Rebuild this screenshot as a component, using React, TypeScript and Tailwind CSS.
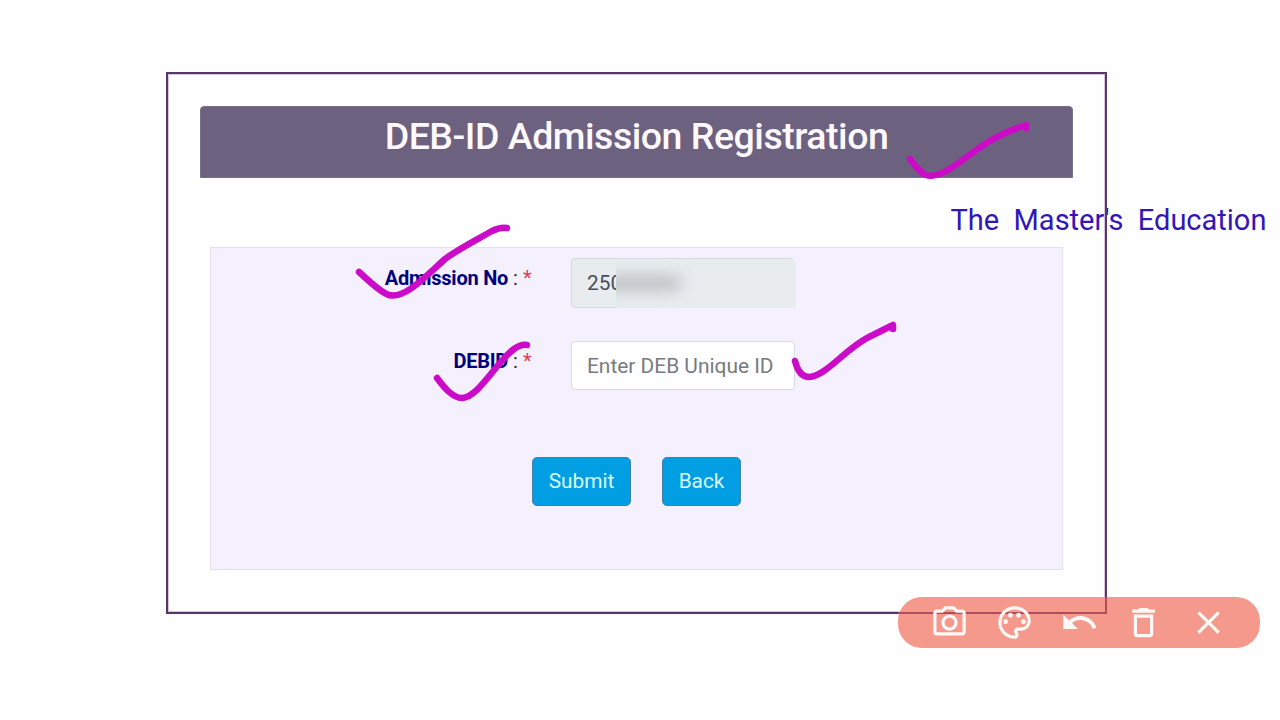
import { MdClose, MdDeleteOutline, MdOutlinePalette, MdOutlinePhotoCamera, MdUndo } from "react-icons/md";

const strokes = [
    "M910 159 C915 166 921 173 926 175 C938 179 955 166 968 156 C984 144 1000 133 1026 125 L1026 128",
    "M359 272 C368 280 381 293 389 295 C405 299 425 277 445 259 C460 248 480 238 492 231 Q500 227 507 228",
    "M437 378 C443 386 452 398 462 398 C479 397 497 361 514 349 Q521 344 527 345",
    "M795 361 C797 369 801 377 809 377 C827 376 847 346 873 335 L893 325 L893 329",
];

const Label = ({ text }: { text: string }) => (
    <label className="block w-[320.5px] pt-[5px] text-right text-[20px] leading-[30px] text-[#333]">
        <span className="font-bold tracking-[-0.23px] text-[#00007c]">{text}</span> : <span className="text-[#d9434e]">*</span>
    </label>
);

const Toolbar = () => (
    <div className="absolute left-[898px] top-[597px] h-[51px] w-[362px]">
        <div className="flex h-full items-center justify-between rounded-[24px] bg-[#f4998c] px-[32px] text-[39px] text-[#fff8f4]">
            <MdOutlinePhotoCamera className="z-10" />
            <MdOutlinePalette className="z-10" />
            <MdUndo className="z-10" />
            <MdDeleteOutline className="z-10" />
            <MdClose className="z-10" />
        </div>
        <div className="absolute left-0 top-0 h-[17px] w-[209px] border-b-2 border-r-2 border-[#b04c5c]"></div>
    </div>
);

export default function App() {
    return (
        <div className="relative h-[720px] w-[1280px] overflow-hidden bg-[#fefefe] pl-[166px] pt-[72px] font-['Roboto',sans-serif]">
            <main className="h-[542px] w-[941px] border-2 border-[#563867] px-[32px] pt-[32px] shadow-[inset_0_0_0_1px_#d9c4df]">
                <header className="h-[72px] w-[873px] rounded-t-[4px] border border-[#77708a] bg-[#6c617f] pt-[6px]">
                    <h1 className="text-center text-[37.5px] font-medium leading-[46px] tracking-[-0.48px] text-[#fef8ff]">DEB-ID Admission Registration</h1>
                </header>

                <form className="ml-[10px] mt-[69px] h-[323px] w-[853px] border border-[#e4e1ec] bg-[#f4f0fe]">
                    <div className="flex pt-[10px]">
                        <Label text="Admission No" />
                        <div className="relative ml-[39.5px] h-[50px] w-[224px] rounded-[4px] border border-[#d5d9e3] bg-[#e8ecef] pl-[15px] text-[20.8px] leading-[49px] text-[#495057]">
                            250
                            <div className="absolute left-[44px] top-0 h-[49px] w-[180px] overflow-hidden rounded-r-[4px] bg-[#e8ecef]">
                                <div className="-ml-[12px] mt-[18px] h-[12px] w-[76px] bg-[#b0b4b7] blur-[8px]"></div>
                            </div>
                        </div>
                    </div>

                    <div className="mt-[33px] flex">
                        <Label text="DEBID" />
                        <input
                            className="ml-[39.5px] h-[49px] w-[224px] rounded-[4px] border border-[#dcdbe4] bg-white pl-[15px] pt-px text-[20.9px] placeholder:text-[#777b80]"
                            placeholder="Enter DEB Unique ID"
                        />
                    </div>

                    <div className="ml-[321px] mt-[67px] flex gap-[31px] text-[20.8px] text-[#d9fbff]">
                        <button type="button" className="h-[49px] w-[99px] rounded-[5px] border border-[#427fa9] bg-[#029ee3]">Submit</button>
                        <button type="button" className="h-[49px] w-[79px] rounded-[5px] border border-[#427fa9] bg-[#029ee3]">Back</button>
                    </div>
                </form>
            </main>

            <p className="absolute left-[950.5px] top-[202px] whitespace-pre text-[29px] leading-[36px] text-[#3216b8]">The  Master's  Education</p>
            <div className="absolute left-[1105px] top-[200px] h-[40px] w-[2px] bg-[#563867]"></div>

            <svg className="absolute left-0 top-0" width="1280" height="720" fill="none" stroke="#cc0bc8" strokeWidth="6.5" strokeLinecap="round" strokeLinejoin="round">
                {strokes.map((d) => (
                    <path key={d} d={d} />
                ))}
            </svg>

            <Toolbar />
        </div>
    );
}
